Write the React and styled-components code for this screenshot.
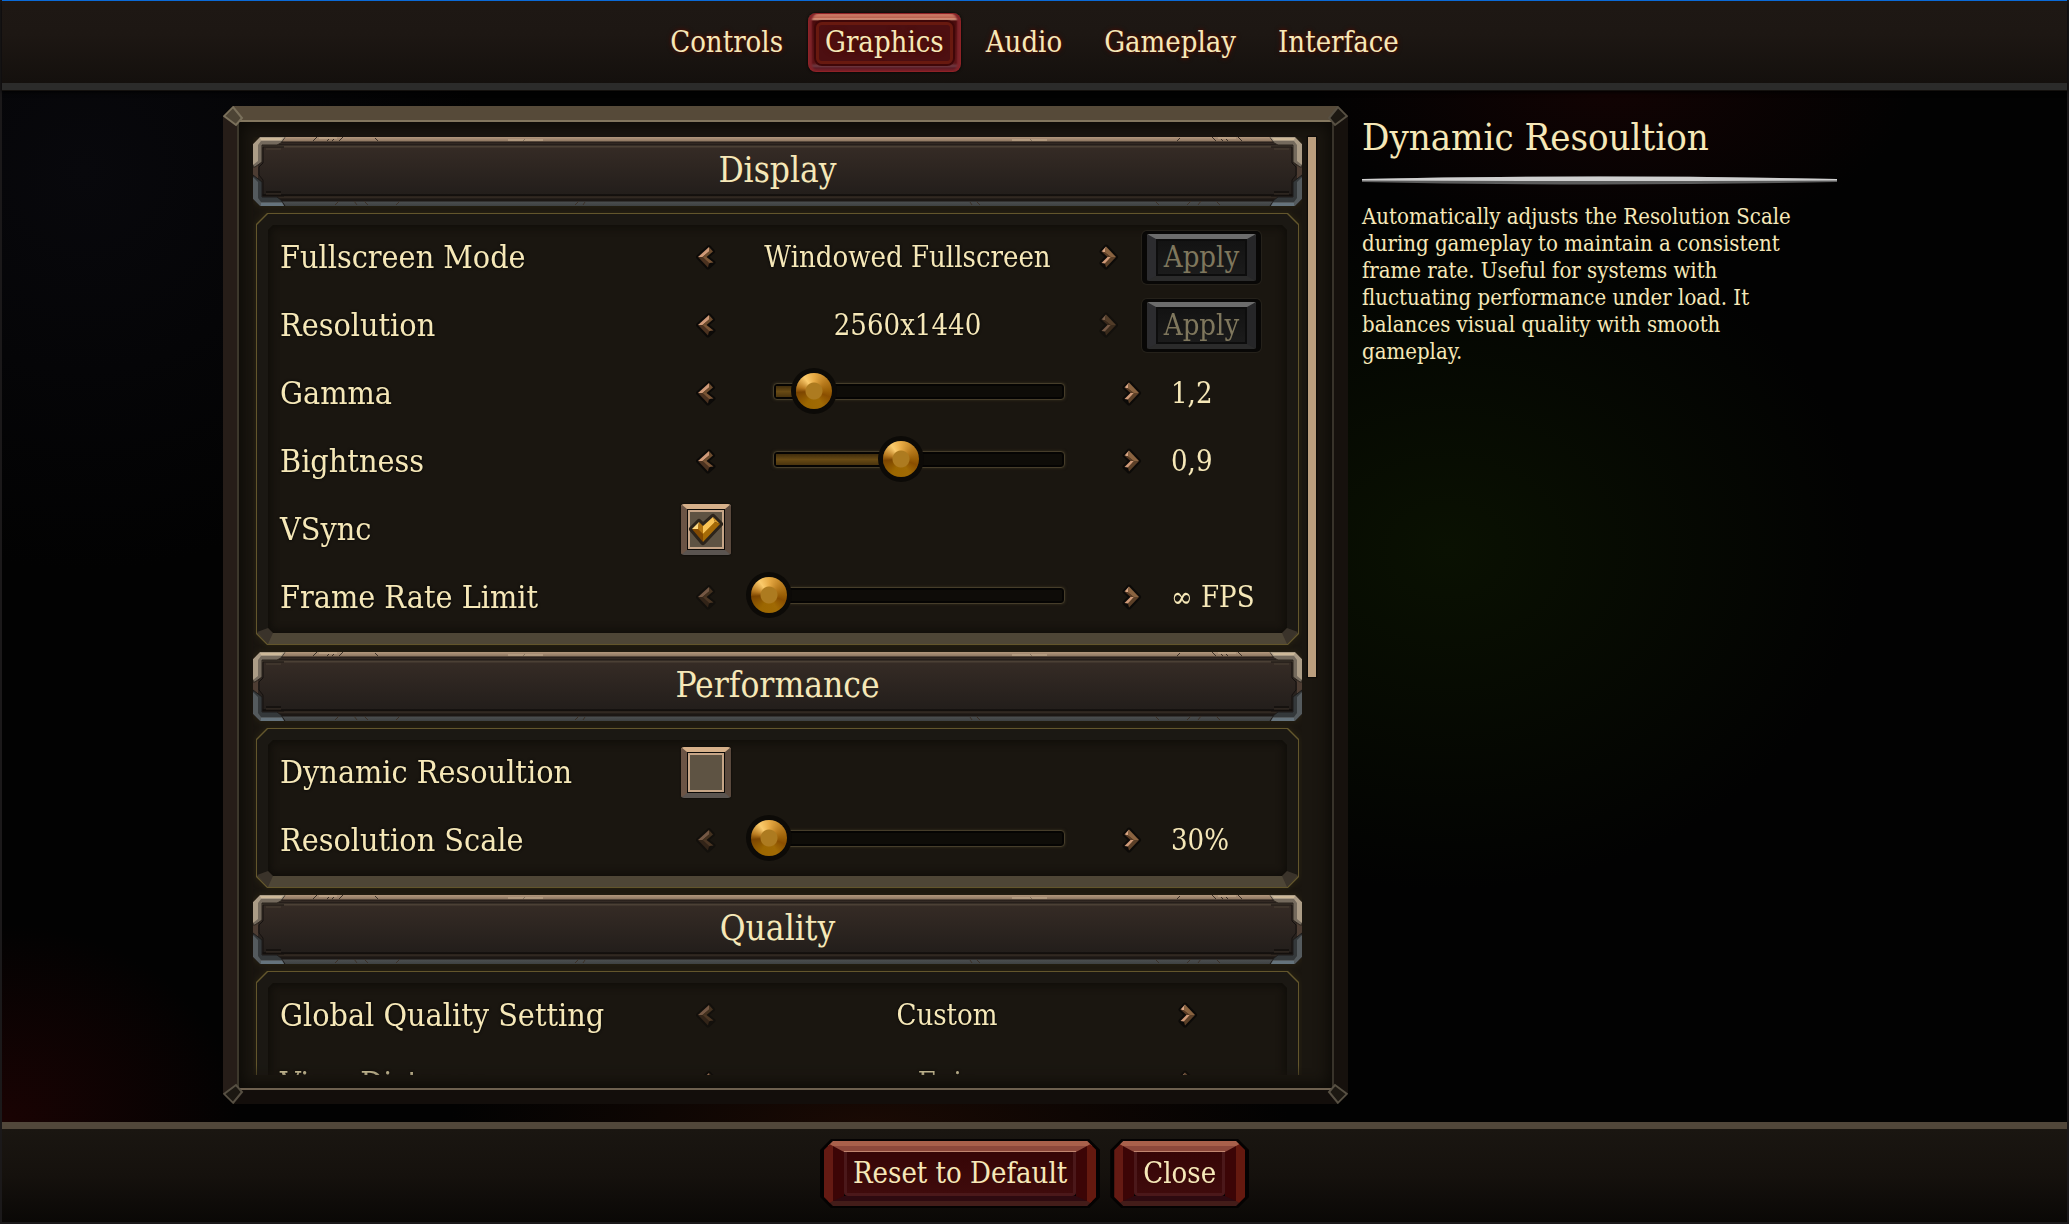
import React, { useState } from "react";
import styled, { createGlobalStyle } from "styled-components";

const theme = {
  FontColor: "#f6e8b8",
  FontFamily: `"DejaVu Serif Condensed", "DejaVu Serif", serif`,
  GoldLine: "#63562c",
  PanelColor: "#1a1610",
};

const chamfer = (n) =>
  `polygon(${n}px 0, calc(100% - ${n}px) 0, 100% ${n}px, 100% calc(100% - ${n}px), calc(100% - ${n}px) 100%, ${n}px 100%, 0 calc(100% - ${n}px), 0 ${n}px)`;

const GlobalStyle = createGlobalStyle`
  * {
    box-sizing: border-box;
  }
  body {
    margin: 0;
    background: #000;
    color: ${theme.FontColor};
    font-family: ${theme.FontFamily};
  }
  button, input {
    font: inherit;
    color: inherit;
    margin: 0;
    padding: 0;
    border: 0;
    background: none;
  }
  h1, h2, p {
    margin: 0;
    font-weight: 400;
  }
`;

const Page = styled.div`
  height: 100vh;
  display: flex;
  flex-direction: column;
  border: solid #1b191a;
  border-width: 0 2px 2px;
  background: radial-gradient(
      ellipse 420px 340px at 70% 45%,
      #0a1102 0%,
      transparent 100%
    ),
    radial-gradient(ellipse 240px 200px at 0% 92%, #1a0303 0%, transparent 100%),
    radial-gradient(ellipse 420px 120px at 42% 92%, #1a0a04 0%, transparent 100%),
    radial-gradient(ellipse 300px 160px at 78% 7%, #120303 0%, transparent 100%),
    radial-gradient(ellipse 400px 400px at 4% 14%, #08080c 0%, transparent 100%),
    #020202;
`;

/* header */

const Header = styled.header`
  height: 90px;
  flex: none;
  display: flex;
  align-items: center;
  justify-content: center;
  border-top: 1px solid #0a6ad8;
  border-bottom: 7px solid #2b2b2a;
  background: linear-gradient(#1e1814, #1d1713 40%, #14100d);
  box-shadow: 0 1px 0 #14110e, 0 2px 4px #000;
`;

const Nav = styled.nav`
  display: flex;
  gap: 8px;
`;

const Tab = styled.button`
  height: 59px;
  padding: 0 17px;
  font-size: 29px;
  line-height: 36px;
  border-radius: 8px;
  text-shadow: 0 0 5px #5c1208, 0 0 3px #3c0a06;
  background: ${(props) =>
    props.$current
      ? `linear-gradient(#4d0f11, #4d0f11) 11px 11px / calc(100% - 22px) calc(100% - 22px) no-repeat,
         linear-gradient(#d98a73 0, #b9614f 5px, #e8ab90 6px, #4a0c0d 8px, #5c1417 50px, #6e3a42 53px, #5a1c26 55px, #8a2028 59px)`
      : "none"};
  box-shadow: ${(props) =>
    props.$current
      ? "inset 0 0 0 1px #8e2226, inset 4px 0 2px #80242a, inset -4px 0 2px #80242a, 0 0 3px #000"
      : "none"};
  position: relative;

  &::after {
    content: "";
    display: ${(props) => (props.$current ? "block" : "none")};
    position: absolute;
    inset: 9px 8px 8px;
    border: 3px solid #68190f;
    border-radius: 6px;
    box-shadow: 0 0 0 2px #3f0708;
  }
`;

/* main columns */

const Main = styled.main`
  flex: 1;
  min-height: 0;
  width: 100%;
  max-width: 1623px;
  margin: 0 auto;
  padding: 16px 0 18px;
  display: grid;
  grid-template-columns: minmax(0, 1fr) 484px;
  grid-template-rows: minmax(0, 1fr);
  gap: 14px;
`;

const Frame = styled.section`
  position: relative;
  min-height: 0;
  display: flex;
  border: 14px solid;
  border-color: #564a39 #16110d #130e0b #261d18;
  clip-path: ${chamfer(10)};
  background: #1a1610;
`;

const FrameInner = styled.div`
  flex: 1;
  min-width: 0;
  display: flex;
  gap: 6px;
  padding: 15px 16px 13px 14px;
  border: solid;
  border-width: 2px;
  border-color: #83775f #38332a #6d604f #3d382c;
  box-shadow: inset 0 0 14px 4px #0d0b07;
`;

const FrameCorner = styled.svg`
  position: absolute;
  width: 21px;
  height: 21px;
  ${(props) => (props.$bottom ? "bottom: -14px;" : "top: -14px;")}
  ${(props) => (props.$right ? "right: -14px;" : "left: -14px;")}
  transform: scale(
    ${(props) => (props.$right ? -1 : 1)},
    ${(props) => (props.$bottom ? -1 : 1)}
  );
`;

const ScrollArea = styled.div`
  flex: 1;
  min-width: 0;
  overflow-y: auto;
  scrollbar-width: none;
  box-shadow: 0 1px 0 #0b0906;
  mask-image: linear-gradient(#000 calc(100% - 10px), rgba(0, 0, 0, 0.6));
`;

const ScrollTrack = styled.div`
  width: 8px;
`;

const ScrollThumb = styled.div`
  height: 540px;
  max-height: 100%;
  background: #bb9e7e;
  box-shadow: 0 0 1px 1px #0d0b08;
`;

/* section banner */

const Banner = styled.div`
  position: relative;
  height: 69px;
  padding-bottom: 4px;
  display: flex;
  align-items: center;
  justify-content: center;
  clip-path: ${chamfer(7)};
  background: linear-gradient(
    #b3987d 0,
    #8f7862 4px,
    #1b1512 5px,
    #382d27 6px,
    #1f1916 8px,
    #4b4035 9px,
    #4b4035 10px,
    #352b25 11px,
    #231e1b 57px,
    #070504 58px,
    #382e26 60px,
    #1c1714 62px,
    #1c1714 64px,
    #4a4d4e 65px,
    #3e4142 69px
  );
`;

const BannerTitle = styled.h2`
  font-size: 35px;
  line-height: 40px;
`;

const BannerEdge = styled.svg`
  position: absolute;
  top: 0;
  width: 340px;
  height: 69px;
  ${(props) => (props.$right ? "right: 0; transform: scaleX(-1);" : "left: 0;")}
`;

/* section panel */

const Section = styled.section`
  filter: drop-shadow(0 0 3px #2c2512);
`;

const Panel = styled.div`
  position: relative;
  margin: 7px 3px;
  padding: 10px 37px 14px 24px;
  clip-path: ${chamfer(11)};
  background: ${theme.GoldLine};

  &::before {
    content: "";
    position: absolute;
    inset: 1px;
    clip-path: ${chamfer(11)};
    background: linear-gradient(transparent calc(100% - 11px), #4e4636 0),
      #1b1813;
  }

  &::after {
    content: "";
    position: absolute;
    inset: 12px;
    clip-path: ${chamfer(5)};
    background: ${theme.PanelColor};
    box-shadow: inset 0 0 8px 2px #0e0c08;
  }
`;

const PanelCorner = styled.svg`
  position: absolute;
  z-index: 1;
  bottom: 1px;
  width: 16px;
  height: 16px;
  ${(props) => (props.$right ? "right: 1px; transform: scaleX(-1);" : "left: 1px;")}
`;

const Row = styled.div`
  position: relative;
  z-index: 1;
  height: 68px;
  display: flex;
  align-items: center;
`;

const Label = styled.label`
  flex: 0 0 401px;
  font-size: 32px;
  line-height: 36px;
  text-shadow: 0 0 3px #000;
`;

const Control = styled.div`
  flex: 1;
  min-width: 0;
  display: flex;
  align-items: center;
`;

const Value = styled.output`
  flex: 1;
  font-size: 29px;
  line-height: 36px;
  text-align: center;
  text-shadow: 0 0 3px #000;
`;

const Trailing = styled.div`
  flex: none;
  width: ${(props) => props.$width}px;
  padding-left: ${(props) => props.$indent}px;
  font-size: 29px;
  line-height: 36px;
  white-space: nowrap;
`;

const ArrowButton = styled.button`
  width: 50px;
  height: 40px;
  display: flex;
  align-items: center;
  justify-content: center;
  opacity: ${(props) => (props.disabled ? 0.5 : 1)};

  svg {
    width: 20px;
    height: 26px;
  }
`;

const ApplyButton = styled.button`
  width: 119px;
  height: 53px;
  padding: 3px 5px;
  border-radius: 5px;
  background: #080706;
  box-shadow: 0 0 0 1px #25211a;
  display: flex;
`;

const ApplyFace = styled.span`
  flex: 1;
  border: solid;
  border-width: 5px 9px;
  border-color: #6c6c6c #262628 #2b2b2b #2c2c2f;
  border-radius: 2px;
  display: flex;
  align-items: center;
  justify-content: center;
  background: linear-gradient(#121212, #1c1c1c);
  box-shadow: inset 0 0 0 2px #0d0d0d;
  color: #7f775d;
`;

const Slider = styled.div`
  flex: 1;
  display: grid;
  align-items: center;
  margin: 0 20px 4px;

  > * {
    grid-area: 1 / 1;
  }
`;

const Track = styled.div`
  height: 17px;
  margin: 0 22px;
  padding: 2px;
  border: 1px solid #463d2a;
  border-radius: 4px;
  background: #0e0c08;
  box-shadow: inset 0 0 0 2px #050403, 0 0 3px #3a3220;
`;

const Fill = styled.div`
  height: 100%;
  background: linear-gradient(#3f2c0c, #684a14 50%, #4a340e);
`;

const Range = styled.input`
  appearance: none;
  width: 100%;
  height: 48px;

  &::-webkit-slider-thumb {
    appearance: none;
    width: 36px;
    height: 36px;
    border-radius: 50%;
    background: radial-gradient(circle, #ad7b20 8px, transparent 9px),
      conic-gradient(
        #e8ab45,
        #b97c1e 50deg,
        #9a5f06 90deg,
        #8a4e00 110deg,
        #a06a04 150deg,
        #9c6700 210deg,
        #7c4500 265deg,
        #b87a20 285deg,
        #fbcb6c 325deg,
        #e8ab45
      );
    box-shadow: 0 0 0 5px #0c0a07;
  }
`;

const CheckBox = styled.span`
  display: grid;

  > * {
    grid-area: 1 / 1;
    width: 50px;
    height: 51px;
  }

  svg {
    pointer-events: none;
  }
`;

const CheckInput = styled.input`
  appearance: none;
  border: solid;
  border-width: 5px 6px;
  border-color: #d6b08a #5b493d #5a5450 #6b5445;
  border-radius: 3px;
  background: #5e5343;
  box-shadow: inset 0 0 0 1px #0c0a08, inset 0 0 0 3px #c6a587, 0 0 2px #000;
`;

/* description column */

const Info = styled.aside`
  padding: 10px 9px 0 0;
`;

const InfoTitle = styled.h1`
  font-size: 38px;
  line-height: 42px;
`;

const Divider = styled.svg`
  display: block;
  width: 100%;
  height: 9px;
  margin: 18px 0;
`;

const InfoText = styled.p`
  max-width: 445px;
  font-size: 22px;
  line-height: 27px;
`;

/* footer */

const Footer = styled.footer`
  flex: none;
  height: 100px;
  display: flex;
  justify-content: center;
  align-items: center;
  gap: 10px;
  padding-bottom: 4px;
  border-top: 7px solid #51473a;
  background: linear-gradient(#1a1611, #15110d 50%, #0a0806);
`;

const RedButton = styled.button`
  padding: 2px 4px;
  height: 69px;
  display: flex;
  clip-path: ${chamfer(11)};
  background: #040202;
`;

const RedOuter = styled.span`
  flex: 1;
  display: flex;
  border: solid;
  border-width: 5px 9px;
  border-color: #a9604b #64190f #431c19 #641a13;
  clip-path: ${chamfer(9)};
`;

const RedMiddle = styled.span`
  flex: 1;
  display: flex;
  border: solid;
  border-width: 6px 11px 5px;
  border-color: #8d483b #3c0506 #2e0a10 #3c0506;
`;

const RedFace = styled.span`
  flex: 1;
  display: flex;
  align-items: center;
  padding: 0 6px;
  border: solid #4b181a;
  border-width: 0 3px 3px;
  border-radius: 0 0 4px 4px;
  background: linear-gradient(#360506, #3f0b0c);
  box-shadow: 0 -1px 0 #c28670;
  font-size: 29px;
  line-height: 36px;
`;

const ArrowLeft = () => (
  <svg viewBox="1 0 20 26">
    <path
      d="M3 13 14 3 18 7.500 11.500 13 18.500 18.500 13 23.500Z"
      fill="#4b3220"
      stroke="#0c0a08"
      strokeWidth="4"
      strokeLinejoin="round"
    />
    <path d="M3 13 14 3 14 7.500 7.500 13Z" fill="#d09a78" />
    <path d="M14 3 18 7.500 11.500 13 7.500 13 14 7.500Z" fill="#6d4c2e" />
    <path d="M7.500 13 11.500 13 18.500 18.500 14 19Z" fill="#7a5536" />
    <path d="M3 13 7.500 13 14 19 13 23.500Z" fill="#4b3220" />
  </svg>
);

const ArrowRight = () => (
  <svg viewBox="0 0 20 26">
    <path
      d="M17 13 7 2.500 2.500 7.500 8.500 13 2.500 19 7 23.500Z"
      fill="#5c4028"
      stroke="#0c0a08"
      strokeWidth="4"
      strokeLinejoin="round"
    />
    <path d="M7 2.500 2.500 7.500 6 8.500Z" fill="#d9a582" />
    <path d="M2.500 7.500 6 8.500 12 13 8.500 13Z" fill="#5a3c26" />
    <path d="M7 2.500 17 13 12 13 6 8.500Z" fill="#8a6340" />
    <path d="M8.500 13 12 13 6 19.500 2.500 19Z" fill="#d09a78" />
    <path d="M17 13 7 23.500 6 19.500 12 13Z" fill="#5c4028" />
  </svg>
);

const CheckMark = () => (
  <svg viewBox="0 0 50 51">
    <path
      d="M11 25 18 18 22 22 32 13 39 20 22 38Z"
      fill="#a86c08"
      stroke="#2c241b"
      strokeWidth="6"
      strokeLinejoin="round"
    />
    <path d="M11 25 18 18 17 25Z" fill="#ffd980" />
    <path d="M18 18 22 22 22 30 17 25Z" fill="#b3740f" />
    <path d="M22 22 32 13 34 18 22 30Z" fill="#f8c355" />
    <path d="M32 13 39 20 34 18Z" fill="#d99a28" />
    <path d="M34 18 39 20 22 38 22 30Z" fill="#a56a06" />
    <path d="M11 25 17 25 22 30 22 38Z" fill="#834a02" />
  </svg>
);

const Corner = ({ bottom, right }) => (
  <FrameCorner viewBox="0 0 21 21" $bottom={bottom} $right={right}>
    <path
      d="M1 10 10 1 19 12 13 19Z"
      fill={bottom || right ? "#1c1812" : "#4d4435"}
      stroke={bottom || right ? "#575043" : "#7a705b"}
      strokeWidth="2"
    />
  </FrameCorner>
);

const Edge = ({ right }) => (
  <BannerEdge viewBox="0 0 340 69" $right={right}>
    <path d="M0 5H5V64H0Z" fill="#4d3d33" />
    <path
      d="M31 10H10V26L6 30V38L10 43V59H31"
      fill="none"
      stroke="#15110f"
      strokeWidth="1"
    />
    <path d="M13 12H28" stroke="#4b4035" />
    <path d="M13 55H28" stroke="#080605" />
    <path d="M13 57H28" stroke="#382e26" />
    <path
      d="M0 7 7 0H32L28 6 24 8H9V25L2 30H0Z"
      fill="#746a5d"
      stroke="#2b241e"
    />
    <path d="M0 7 7 0H32L29 4H8L5 8V24L0 28Z" fill="#ab9c86" />
    <path d="M7 1H30L28 3H8Z" fill="#cdb999" />
    <path
      d="M0 38 9 45V60H24L28 63 32 69H7L0 62Z"
      fill="#34383a"
      stroke="#1d1b1a"
    />
    <path d="M0 40 5 45V61L8 65H29L31 69H7L0 62Z" fill="#545a5d" />
    <path d="M8 66H29L31 69H8Z" fill="#65737c" />
    <g fill="none" stroke="#3b3027">
      <path d="M60 4 64 0M74 4 76 2M79 4 81 2M86 4 90 0M122 1 125 4M270 4 272 2" />
      <path d="M82 68 86 64M101 64 104 68M111 64 115 68M143 68 147 64M322 68 326 64M330 68 332 65" />
    </g>
    <g fill="none" stroke="#c9b193">
      <path d="M66 1H84M255 3H290" />
    </g>
  </BannerEdge>
);

const Choice = ({
  name,
  options,
  start,
  trailing,
  indent = 0,
  atStart,
  atEnd,
  children,
}) => {
  const [index, setIndex] = useState(start);
  return (
    <Row>
      <Label as="span">{name}</Label>
      <Control>
        <ArrowButton
          aria-label={`Previous ${name}`}
          disabled={atStart}
          onClick={() => setIndex(Math.max(0, index - 1))}
        >
          <ArrowLeft />
        </ArrowButton>
        <Value>{options[index]}</Value>
        <ArrowButton
          aria-label={`Next ${name}`}
          disabled={atEnd}
          onClick={() => setIndex(Math.min(options.length - 1, index + 1))}
        >
          <ArrowRight />
        </ArrowButton>
      </Control>
      <Trailing $width={trailing} $indent={indent}>
        {children}
      </Trailing>
    </Row>
  );
};

const Apply = () => (
  <ApplyButton>
    <ApplyFace>Apply</ApplyFace>
  </ApplyButton>
);

const SliderRow = ({ id, name, start, text }) => {
  const [value, setValue] = useState(start);
  return (
    <Row>
      <Label htmlFor={id}>{name}</Label>
      <Control>
        <ArrowButton
          aria-label={`Decrease ${name}`}
          disabled={value === 0}
          onClick={() => setValue(Math.max(0, value - 5))}
        >
          <ArrowLeft />
        </ArrowButton>
        <Slider>
          <Track>
            <Fill style={{ width: `${value}%` }} />
          </Track>
          <Range
            id={id}
            type="range"
            value={value}
            onChange={(e) => setValue(Number(e.target.value))}
          />
        </Slider>
        <ArrowButton
          aria-label={`Increase ${name}`}
          onClick={() => setValue(Math.min(100, value + 5))}
        >
          <ArrowRight />
        </ArrowButton>
      </Control>
      <Trailing $width={105} $indent={14}>
        {text}
      </Trailing>
    </Row>
  );
};

const CheckRow = ({ id, name, start }) => {
  const [checked, setChecked] = useState(start);
  return (
    <Row>
      <Label htmlFor={id}>{name}</Label>
      <CheckBox>
        <CheckInput
          id={id}
          type="checkbox"
          checked={checked}
          onChange={() => setChecked(!checked)}
        />
        {checked && <CheckMark />}
      </CheckBox>
    </Row>
  );
};

const Group = ({ title, children }) => (
  <Section>
    <Banner>
      <Edge />
      <Edge right />
      <BannerTitle>{title}</BannerTitle>
    </Banner>
    <Panel>
      {children}
      <PanelCorner viewBox="0 0 16 16">
        <path d="M0 4 11 0 16 5 11 16Z" fill="#3a332a" />
      </PanelCorner>
      <PanelCorner viewBox="0 0 16 16" $right>
        <path d="M0 4 11 0 16 5 11 16Z" fill="#3a332a" />
      </PanelCorner>
    </Panel>
  </Section>
);

const tabs = ["Controls", "Graphics", "Audio", "Gameplay", "Interface"];

export default () => {
  const [current, setCurrent] = useState("Graphics");
  return (
    <Page>
      <GlobalStyle />
      <Header>
        <Nav>
          {tabs.map((tab) => (
            <Tab
              key={tab}
              $current={tab === current}
              onClick={() => setCurrent(tab)}
            >
              {tab}
            </Tab>
          ))}
        </Nav>
      </Header>
      <Main>
        <Frame>
          <FrameInner>
            <ScrollArea>
              <Group title="Display">
                <Choice
                  name="Fullscreen Mode"
                  options={["Fullscreen", "Windowed Fullscreen", "Windowed"]}
                  start={1}
                  trailing={128}
                  indent={8}
                >
                  <Apply />
                </Choice>
                <Choice
                  name="Resolution"
                  options={["1920x1080", "2560x1440"]}
                  start={1}
                  trailing={128}
                  indent={8}
                  atEnd
                >
                  <Apply />
                </Choice>
                <SliderRow id="gamma" name="Gamma" start={15} text="1,2" />
                <SliderRow id="bightness" name="Bightness" start={44} text="0,9" />
                <CheckRow id="vsync" name="VSync" start />
                <SliderRow
                  id="frame-rate"
                  name="Frame Rate Limit"
                  start={0}
                  text="∞ FPS"
                />
              </Group>
              <Group title="Performance">
                <CheckRow id="dynamic" name="Dynamic Resoultion" start={false} />
                <SliderRow id="scale" name="Resolution Scale" start={0} text="30%" />
              </Group>
              <Group title="Quality">
                <Choice
                  name="Global Quality Setting"
                  options={["Custom", "Low", "Epic"]}
                  start={0}
                  trailing={49}
                  atStart
                />
                <Choice
                  name="View Distance"
                  options={["Low", "High", "Epic"]}
                  start={2}
                  trailing={49}
                />
              </Group>
            </ScrollArea>
            <ScrollTrack>
              <ScrollThumb />
            </ScrollTrack>
          </FrameInner>
          <Corner />
          <Corner right />
          <Corner bottom />
          <Corner bottom right />
        </Frame>
        <Info>
          <InfoTitle>Dynamic Resoultion</InfoTitle>
          <Divider viewBox="0 0 475 9" preserveAspectRatio="none">
            <path d="M0 3Q237 -2 475 3V6Q237 11 0 6Z" fill="#5c5c5c" />
            <path d="M0 3Q237 -2 475 3V4.500Q237 5.500 0 4.500Z" fill="#cfcfcf" />
          </Divider>
          <InfoText>
            Automatically adjusts the Resolution Scale during gameplay to
            maintain a consistent frame rate. Useful for systems with
            fluctuating performance under load. It balances visual quality with
            smooth gameplay.
          </InfoText>
        </Info>
      </Main>
      <Footer>
        {["Reset to Default", "Close"].map((text) => (
          <RedButton key={text}>
            <RedOuter>
              <RedMiddle>
                <RedFace>{text}</RedFace>
              </RedMiddle>
            </RedOuter>
          </RedButton>
        ))}
      </Footer>
    </Page>
  );
};
